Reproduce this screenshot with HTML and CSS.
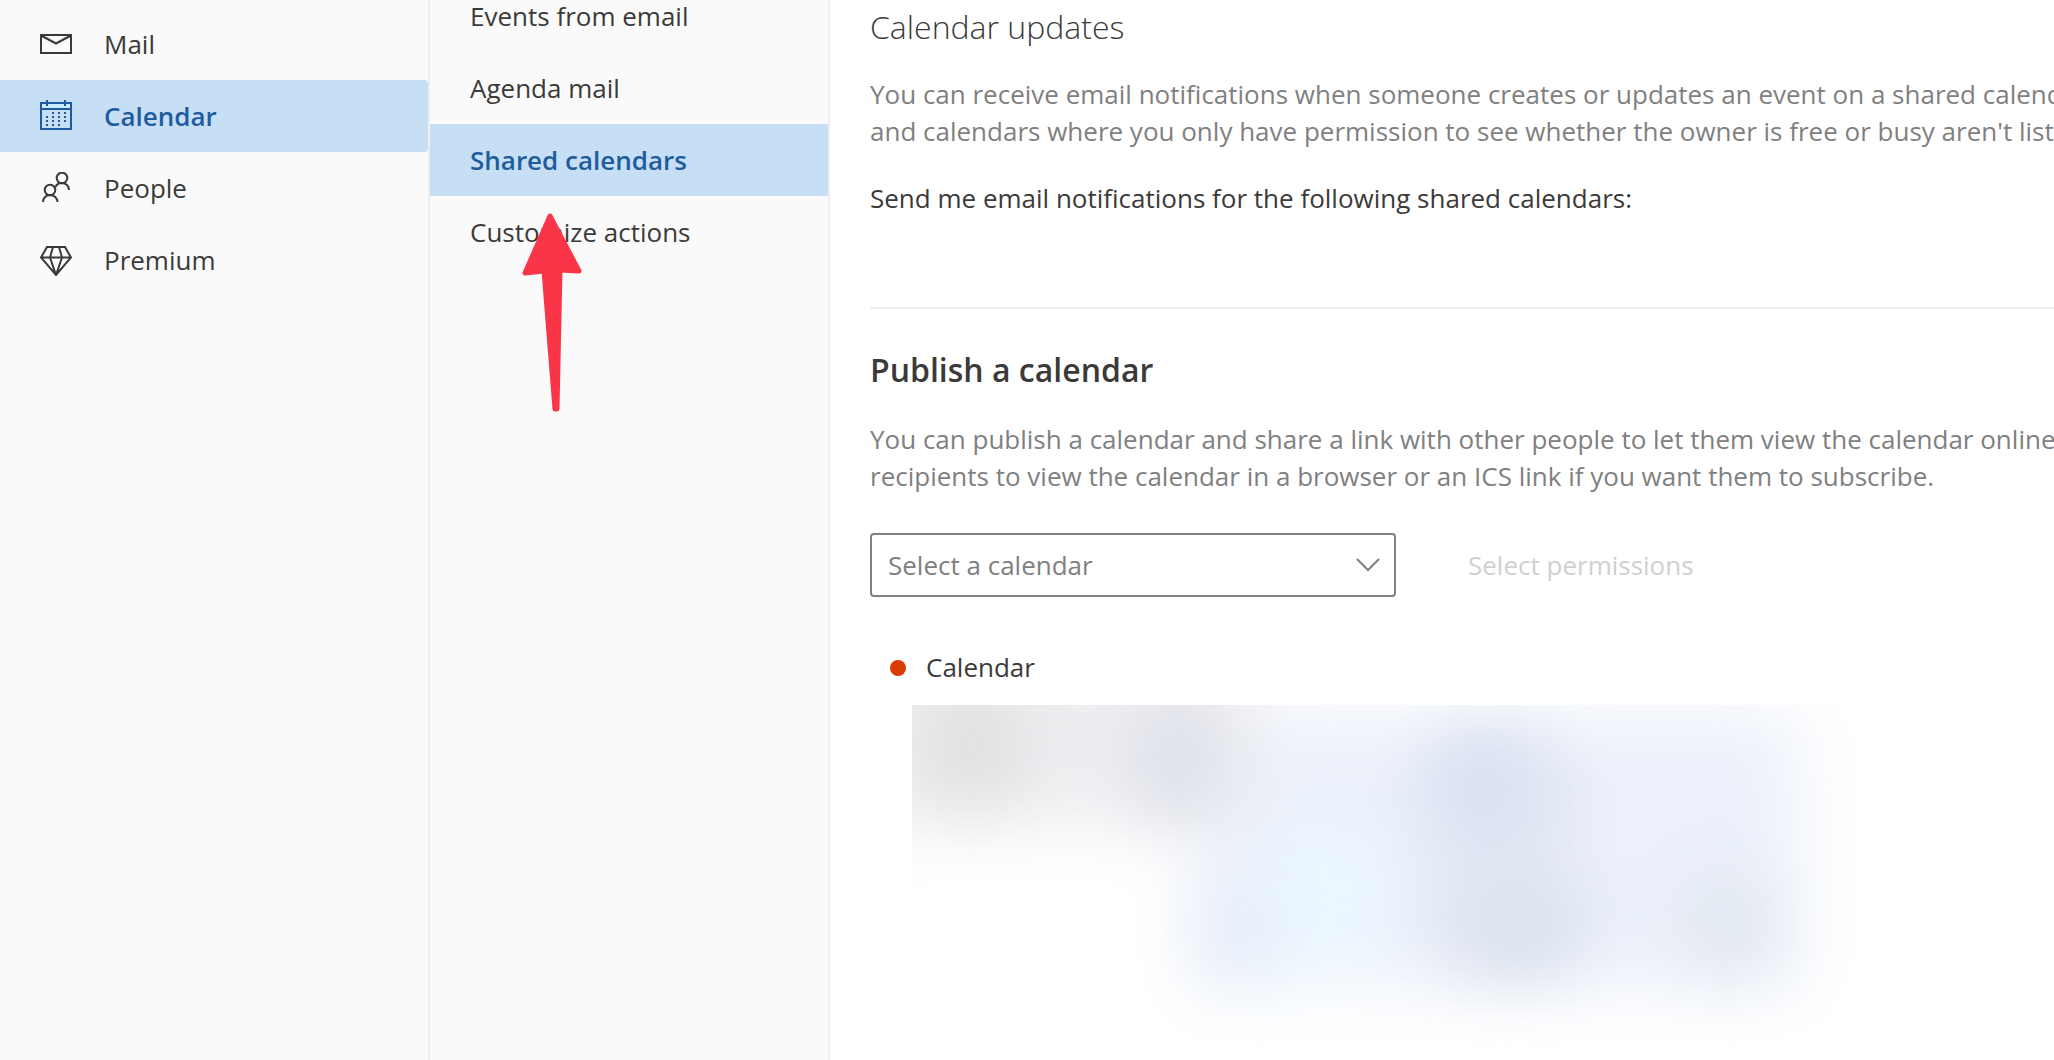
FILE: index.html
```html
<!DOCTYPE html>
<html lang="en">
<head>
    <meta charset="UTF-8">
    <meta name="viewport" content="width=device-width, initial-scale=1.0">
    <title>Settings - Shared calendars</title>
    <link rel="stylesheet" href="styles.css">
</head>
<body>

    <!-- Categories -->
    <nav class="categories">
        <a href="#mail" class="category">
            <svg class="icon" viewBox="0 0 32 32">
                <path d="M1 7h30v18H1zM1 7.500l15 8 15-8"/>
            </svg>
            Mail
        </a>
        <a href="#calendar" class="category selected">
            <svg class="icon" viewBox="0 0 32 32">
                <path class="icon-fill" d="M1 3h30v6H1z"/>
                <path d="M1 3h30v26H1zM1 9h30M7 0v6M25 0v6"/>
                <path stroke-dasharray="2 2" d="M7 16v10M13 12v14M19 12v14M25 12v10"/>
            </svg>
            Calendar
        </a>
        <a href="#people" class="category">
            <svg class="icon" viewBox="0 0 32 32">
                <circle cx="22" cy="6" r="5.300"/>
                <circle cx="10" cy="18" r="5.300"/>
                <path d="M3 30c0-4 3-7 7-7s7.500 3 7.500 7M15.500 15c1-2.500 3.500-4 6.500-4 4 0 7 3 7 7"/>
            </svg>
            People
        </a>
        <a href="#premium" class="category">
            <svg class="icon" viewBox="0 0 32 32">
                <path d="M7 3h18l6 10.500L16 31 1 13.500zM1 13.500h30M13 3l-3 10.500L16 31l6-17.500L19 3"/>
            </svg>
            Premium
        </a>
    </nav>

    <!-- Calendar pages -->
    <nav class="pages">
        <a href="#events" class="page">Events from email</a>
        <a href="#agenda" class="page">Agenda mail</a>
        <a href="#shared" class="page selected">Shared calendars</a>
        <a href="#actions" class="page">Customize actions</a>
        <svg class="arrow" viewBox="0 0 64 204">
            <path d="M30 5L5 62l19-2 11 138h2l3-139 19 1z"/>
        </svg>
    </nav>

    <!-- Main Content -->
    <main class="content">
        <section class="updates">
            <h2>Calendar updates</h2>
            <p class="hint">
                You can receive email notifications when someone creates or updates an event on a shared calendar<br>
                and calendars where you only have permission to see whether the owner is free or busy aren't listed
            </p>
            <p>Send me email notifications for the following shared calendars:</p>
        </section>

        <section class="publish">
            <h2>Publish a calendar</h2>
            <p class="hint">
                You can publish a calendar and share a link with other people to let them view the calendar online<br>
                recipients to view the calendar in a browser or an ICS link if you want them to subscribe.
            </p>

            <div class="fields">
                <div class="dropdown">
                    <select aria-label="Select a calendar">
                        <option>Select a calendar</option>
                    </select>
                    <svg class="chevron" viewBox="0 0 24 14">
                        <path d="M1 1l11 11L23 1"/>
                    </svg>
                </div>
                <button type="button" class="permissions" disabled>Select permissions</button>
            </div>

            <div class="published">
                <span class="dot"></span>
                Calendar
            </div>

            <!-- Obscured links -->
            <svg class="links" viewBox="0 0 984 340" preserveAspectRatio="none">
                <g class="blur">
                    <rect x="285" y="10" width="600" height="270" fill="#ebf0fa"/>
                    <rect x="-60" y="-60" width="400" height="180" fill="#eeeef1"/>
                    <rect x="340" y="130" width="130" height="130" fill="#ebf7ff"/>
                    <rect x="530" y="30" width="120" height="250" fill="#e2e7f3"/>
                </g>
                <g class="blur">
                    <ellipse cx="60" cy="40" rx="48" ry="60" fill="#dedee0"/>
                    <ellipse cx="265" cy="55" rx="38" ry="60" fill="#d9dde8"/>
                    <ellipse cx="322" cy="225" rx="26" ry="50" fill="#e2eaf6"/>
                    <ellipse cx="570" cy="80" rx="50" ry="50" fill="#d6dff1"/>
                    <ellipse cx="610" cy="222" rx="60" ry="40" fill="#d9e1ed"/>
                    <ellipse cx="815" cy="222" rx="44" ry="48" fill="#e0e6ee"/>
                </g>
            </svg>
        </section>
    </main>

</body>
</html>
```

FILE: styles.css
```css
* {
    box-sizing: border-box;
}

body {
    margin: 0;
    display: flex;
    height: 100vh;
    overflow: hidden;
    font-family: "Open Sans", "Noto Sans", sans-serif;
    font-size: 26px;
    line-height: 37px;
    color: #3b3a39;
    background-color: white;
}

/* Navigation */
.categories,
.pages {
    flex: none;
    background-color: #fafafa;
    border-right: 2px solid #eeeeee;
}

.categories {
    width: 430px;
    padding-top: 8px;
}

.pages {
    position: relative;
    width: 400px;
    margin-top: -20px; /* list is scrolled */
}

.category,
.page {
    display: flex;
    align-items: center;
    height: 72px;
    padding-left: 40px;
    color: inherit;
    text-decoration: none;
}

.category {
    gap: 32px;
    border-radius: 0 4px 4px 0;
}

.selected {
    background-color: #c7dff4;
    color: #1f5c9f;
    font-weight: 600;
}

.icon {
    width: 32px;
    height: 32px;
    fill: none;
    stroke: currentColor;
    stroke-width: 2;
}

.icon-fill {
    fill: #c6ecff;
    stroke: none;
}

.arrow {
    position: absolute;
    top: 231px;
    left: 90px;
    width: 64px;
    height: 204px;
    fill: #fa3547;
    stroke: #fa3547;
    stroke-width: 5;
    stroke-linejoin: round;
}

/* Main Content */
.content {
    flex: 1;
    min-width: 0;
    padding-left: 40px;
    overflow: hidden;
    white-space: nowrap;
}

h2 {
    margin: 0;
    font-size: 32px;
    line-height: 44px;
    font-weight: 600;
}

p {
    margin: 0;
}

.hint {
    color: #808080;
}

.updates {
    padding: 5px 0 90px;
    border-bottom: 2px solid #eeeeee;
}

.updates h2 {
    font-weight: 300;
}

.updates .hint {
    margin: 27px 0 30px;
}

.publish {
    padding-top: 39px;
}

.publish .hint {
    margin: 29px 0 38px;
}

.fields {
    display: flex;
    align-items: center;
    gap: 72px;
}

.dropdown {
    position: relative;
    width: 526px;
}

.dropdown select {
    display: block;
    width: 100%;
    height: 64px;
    padding: 0 56px 0 16px;
    border: 2px solid #808080;
    border-radius: 4px;
    background-color: white;
    color: #808080;
    font: inherit;
    appearance: none;
}

.chevron {
    position: absolute;
    top: 25px;
    right: 16px;
    width: 24px;
    height: 14px;
    fill: none;
    stroke: #808080;
    stroke-width: 2;
    pointer-events: none;
}

.permissions {
    padding: 0;
    border: none;
    background: none;
    color: #d0d0d0;
    font: inherit;
}

.published {
    display: flex;
    align-items: center;
    gap: 20px;
    padding-left: 20px;
    margin: 52px 0 19px;
}

.dot {
    width: 16px;
    height: 16px;
    border-radius: 50%;
    background-color: #da3b01;
}

/* Obscured links */
.links {
    display: block;
    width: 86%;
    max-width: 984px;
    height: 340px;
    margin-left: 42px;
}

.blur {
    filter: blur(34px);
}
```
